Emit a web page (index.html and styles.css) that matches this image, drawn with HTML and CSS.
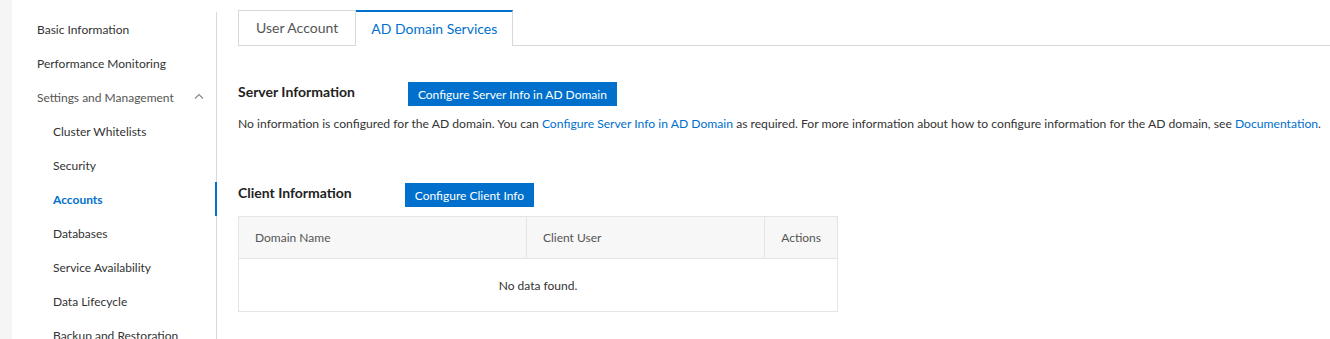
FILE: index.html
```html
<!DOCTYPE html>
<html lang="en">
<head>
    <meta charset="UTF-8">
    <title>Accounts - AD Domain Services</title>
    <link rel="stylesheet" href="styles.css">
</head>
<body>
    <div class="page">
        <div class="edge"></div>
        <aside class="sidebar">
            <ul class="menu">
                <li class="item">Basic Information</li>
                <li class="item">Performance Monitoring</li>
                <li class="item group">
                    <span>Settings and Management</span>
                    <svg class="chevron" width="10" height="6" viewBox="0 0 10 6"><path d="M1 5.5 L5 1.5 L9 5.5" fill="none" stroke="#888" stroke-width="1.1"/></svg>
                </li>
                <li class="item sub">Cluster Whitelists</li>
                <li class="item sub">Security</li>
                <li class="item sub active">Accounts</li>
                <li class="item sub">Databases</li>
                <li class="item sub">Service Availability</li>
                <li class="item sub">Data Lifecycle</li>
                <li class="item sub">Backup and Restoration</li>
            </ul>
        </aside>
        <main class="content">
            <div class="tabs">
                <div class="tab">User Account</div>
                <div class="tab active">AD Domain Services</div>
            </div>

            <section class="block server">
                <div class="block-head">
                    <h3>Server Information</h3>
                    <button class="btn">Configure Server Info in AD Domain</button>
                </div>
                <p class="note">No information is configured for the AD domain. You can <a href="#">Configure Server Info in AD Domain</a> as required. For more information about how to configure information for the AD domain, see <a href="#">Documentation</a>.</p>
            </section>

            <section class="block client">
                <div class="block-head">
                    <h3>Client Information</h3>
                    <button class="btn">Configure Client Info</button>
                </div>
                <table class="grid">
                    <thead>
                        <tr>
                            <th class="col-domain">Domain Name</th>
                            <th class="col-user">Client User</th>
                            <th class="col-actions">Actions</th>
                        </tr>
                    </thead>
                    <tbody>
                        <tr>
                            <td colspan="3" class="empty">No data found.</td>
                        </tr>
                    </tbody>
                </table>
            </section>
        </main>
    </div>
</body>
</html>
```

FILE: styles.css
```css
html, body {
    margin: 0;
    padding: 0;
    height: 100%;
    overflow: hidden;
}

body {
    font-family: Lato, "Open Sans", sans-serif;
    font-size: 12px;
    color: #333;
    background-color: #fff;
}

.page {
    display: flex;
    height: 339px;
}

.edge {
    width: 12px;
    flex-shrink: 0;
    background-color: #f5f5f5;
}

.sidebar {
    width: 205px;
    flex-shrink: 0;
    padding-top: 10px;
    box-sizing: border-box;
}

.menu {
    list-style: none;
    margin: 0;
    padding: 0;
    border-right: 1px solid #d9d9d9;
    height: 100%;
}

.item {
    display: flex;
    align-items: center;
    justify-content: space-between;
    height: 34px;
    padding: 0 12px 0 25px;
    color: #333;
    white-space: nowrap;
}

.item:first-child {
    margin-top: 2px;
}

.group {
    color: #555;
}

.chevron {
    margin-top: -2px;
}

.sub {
    padding-left: 41px;
}

.active {
    color: #0070cc;
    font-weight: bold;
    box-shadow: inset -2px 0 0 #0070cc;
    margin-right: -1px;
}

.content {
    flex: 1;
    padding: 10px 0 0 21px;
}

.tabs {
    display: flex;
    border-bottom: 1px solid #d9d9d9;
    height: 35px;
}

.tab {
    display: flex;
    align-items: center;
    padding: 0 17px 1px;
    height: 35px;
    font-size: 14px;
    color: #555;
    border: 1px solid #d9d9d9;
    border-bottom: none;
    box-sizing: border-box;
}

.tab.active {
    color: #0070cc;
    border-left: none;
    border-top: 2px solid #0070cc;
    background-color: #fff;
    height: 36px;
    padding: 0 15px 2px;
    font-weight: normal;
    box-shadow: none;
    margin-right: 0;
}

.block-head {
    display: flex;
    align-items: center;
}

.block-head h3 {
    margin: 0 0 5px;
    font-size: 14px;
    font-weight: bold;
    color: #222;
}

.btn {
    font-family: inherit;
    font-size: 12px;
    color: #fff;
    background-color: #0070cc;
    border: none;
    height: 24px;
    padding: 0 10px;
    cursor: pointer;
}

.server {
    margin-top: 36px;
}

.server .btn {
    margin-left: 53px;
}

.note {
    margin: 9px 0 0;
    line-height: 18px;
    font-size: 12.15px;
    white-space: nowrap;
}

.note a {
    color: #0070cc;
    text-decoration: none;
}

.client {
    margin-top: 50px;
}

.client .btn {
    margin-left: 53px;
}

.grid {
    margin-top: 9px;
    width: 600px;
    border-collapse: collapse;
    border: 1px solid #e5e5e5;
}

.grid th {
    height: 41px;
    background-color: #f7f7f7;
    font-weight: normal;
    color: #555;
    text-align: left;
    padding: 0 16px;
    border-left: 1px solid #e5e5e5;
    border-bottom: 1px solid #e5e5e5;
}

.col-domain {
    width: 257px;
}

.col-user {
    width: 207px;
}

.grid .col-actions {
    text-align: right;
}

.empty {
    height: 50px;
    text-align: center;
    color: #333;
}
```
